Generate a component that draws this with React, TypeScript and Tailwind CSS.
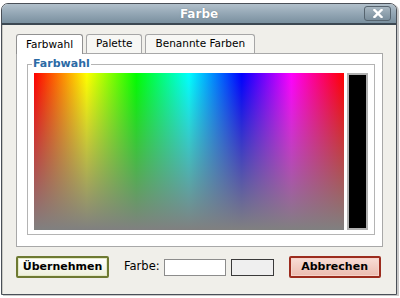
import React from "react";

const tabs = ["Farbwahl", "Palette", "Benannte Farben"];

export default function App() {
  return (
    <div className="w-[400px] h-[298px] bg-white pt-[3px] pl-[1px] font-['DejaVu_Sans',_Verdana,_sans-serif] text-[10.5px] text-black">
      <div className="w-[396px] h-[292px] flex flex-col rounded-t-[7px] border border-[#4a5058] bg-[#f0efea] shadow-[2px_1px_0_#c8c8c8] overflow-hidden">
        {/* title bar */}
        <div className="relative h-[21px] shrink-0 flex items-center justify-center bg-gradient-to-b from-[#b1c0cb] via-[#94a7b5] to-[#7a909f] border-b-2 border-[#3c4852]">
          <span className="text-white font-bold text-[12px] [text-shadow:0_0_1px_#55636e]">Farbe</span>
          <button className="absolute right-[5px] top-[2px] w-[27px] h-[15px] rounded-[3px] border border-[#56646f] bg-gradient-to-b from-[#a7b6c1] to-[#7a8e9c] flex items-center justify-center">
            <svg width="10" height="9" viewBox="0 0 10 9">
              <path d="M1.5 1 L8.5 8 M8.5 1 L1.5 8" stroke="white" strokeWidth="2.4" strokeLinecap="square" />
            </svg>
          </button>
        </div>

        <div className="flex-1 flex flex-col px-[13px] pt-[8px] border-l border-[#c9c9c2]">
          {/* tabs */}
          <div className="flex gap-[3px] items-end h-[20px]">
            {tabs.map((t, i) => (
              <div
                key={t}
                className={
                  i === 0
                    ? "h-[20px] px-[9px] flex items-center bg-white border border-b-0 border-[#919191] rounded-t-[3px] relative top-[1px]"
                    : "h-[19px] px-[9px] flex items-center bg-[#f7f7f4] border border-b-0 border-[#a6a6a6] rounded-t-[3px]"
                }
              >
                {t}
              </div>
            ))}
          </div>

          {/* panel */}
          <div className="h-[194px] bg-white border border-[#a8a8a8] px-[10px] pt-[4px]">
            <fieldset className="h-[177px] border border-[#b4b4b4] px-[6px] pt-0">
              <legend className="px-[1px] ml-[-2px] font-bold text-[11px] text-[#2b6aa5] leading-[12px]">Farbwahl</legend>
              <div className="flex gap-[3px] mt-[3px]">
                <div className="relative w-[310px] h-[157px] bg-[linear-gradient(to_right,#ff0000_0%,#ffff00_17%,#00ff00_33%,#00ffff_50%,#0000ff_67%,#ff00ff_83%,#ff0000_100%)]">
                  <div className="absolute inset-0 bg-gradient-to-b from-[rgba(128,128,128,0)] to-[#808080]" />
                </div>
                <div className="w-[21px] h-[157px] border-[2px] border-[#b0b0b0] bg-black" />
              </div>
            </fieldset>
          </div>

          {/* bottom bar */}
          <div className="flex items-center mt-[9px]">
            <button className="w-[93px] h-[22px] rounded-[2px] border-2 border-[#6e7a32] bg-gradient-to-b from-white to-[#eef0dc] shadow-[inset_0_0_0_1px_#e4e9c7] font-bold text-[11px]">
              Übernehmen
            </button>
            <span className="ml-[15px] text-[11.5px]">Farbe:</span>
            <div className="ml-[4px] w-[62px] h-[17px] bg-white border border-[#8c8c8c]" />
            <div className="ml-[5px] w-[43px] h-[17px] bg-[#efefef] border border-[#3a3a3a]" />
            <button className="ml-[15px] w-[92px] h-[22px] rounded-[2px] border-2 border-[#9c2c1e] bg-gradient-to-b from-[#f8ddd6] to-[#ecbcb0] shadow-[inset_0_0_0_1px_#f6d4cb] font-bold text-[11px]">
              Abbrechen
            </button>
          </div>
        </div>
      </div>
    </div>
  );
}
